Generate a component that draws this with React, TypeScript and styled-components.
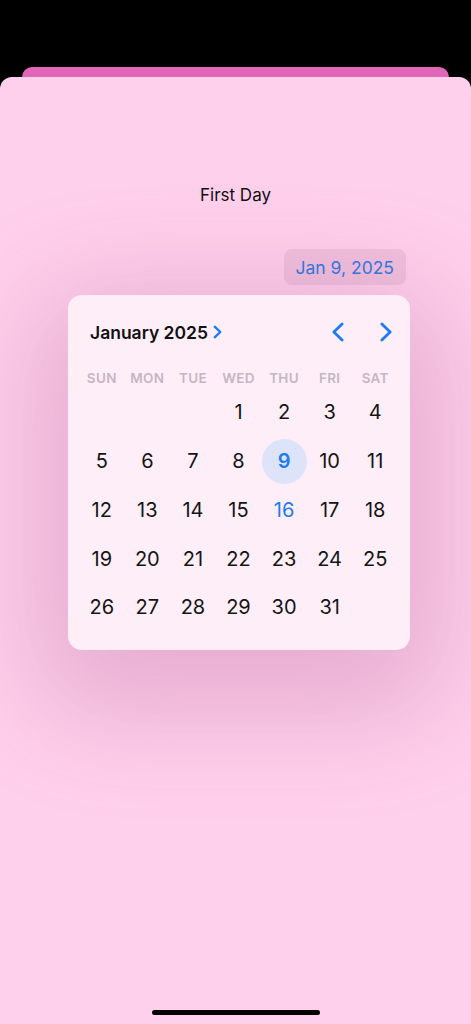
import React from "react";
import styled, { createGlobalStyle } from "styled-components";

const Global = createGlobalStyle`
  html, body { margin: 0; padding: 0; background: #000; }
  body { font-family: Inter, "Noto Sans", "Liberation Sans", sans-serif; -webkit-font-smoothing: antialiased; }
  * { box-sizing: border-box; }
`;

const Screen = styled.div`
  width: 471px;
  height: 1024px;
  background: #000;
  display: flex;
  flex-direction: column;
  padding-top: 67px;
  overflow: hidden;
`;

const BackCard = styled.div`
  height: 10px;
  margin: 0 22px;
  background: #e166b8;
  border-radius: 10px 10px 0 0;
  flex-shrink: 0;
`;

const Sheet = styled.div`
  flex: 1;
  background: #ffd0ec;
  border-radius: 12px 12px 0 0;
  display: flex;
  flex-direction: column;
  align-items: center;
  padding-top: 107px;
`;

const Title = styled.div`
  font-size: 17px;
  line-height: 22px;
  color: #111;
  letter-spacing: 0;
`;

const Content = styled.div`
  align-self: stretch;
  display: flex;
  flex-direction: column;
  align-items: flex-end;
  padding-right: 61px;
  margin-top: 43px;
`;

const DateButton = styled.div`
  height: 36px;
  padding: 0 12px;
  margin-right: 4px;
  border-radius: 8px;
  background: rgba(150, 90, 130, 0.13);
  color: #2a7ce6;
  font-size: 17.5px;
  display: flex;
  align-items: center;
  letter-spacing: 0;
`;

const Calendar = styled.div`
  margin-top: 10px;
  width: 342px;
  height: 355px;
  background: #feeef8;
  border-radius: 14px;
  box-shadow: 0 30px 110px 30px rgba(150, 60, 115, 0.24);
  padding: 15px 12px 0 11px;
  display: flex;
  flex-direction: column;
`;

const Header = styled.div`
  height: 44px;
  display: flex;
  align-items: center;
  padding-left: 11px;
  padding-right: 6px;
`;

const MonthLabel = styled.div`
  font-size: 17.5px;
  font-weight: 600;
  color: #111;
  letter-spacing: 0;
  display: flex;
  align-items: center;
  gap: 5px;
`;

const Nav = styled.div`
  margin-left: auto;
  display: flex;
  align-items: center;
  gap: 36px;
`;

const Grid = styled.div`
  display: grid;
  grid-template-columns: repeat(7, 1fr);
`;

const WeekHead = styled(Grid)`
  margin-top: 14px;
  height: 20px;
  align-items: center;
`;

const WeekDay = styled.div`
  text-align: center;
  font-size: 13.5px;
  font-weight: 600;
  color: #c6b6c3;
  letter-spacing: 0.3px;
`;

const DayCell = styled.div`
  height: 48.75px;
  display: flex;
  align-items: center;
  justify-content: center;
`;

const DayNum = styled.div<{ $selected?: boolean; $today?: boolean }>`
  width: 45px;
  height: 45px;
  border-radius: 50%;
  display: flex;
  align-items: center;
  justify-content: center;
  font-size: 20px;
  font-weight: ${(p) => (p.$selected ? 600 : 400)};
  color: ${(p) => (p.$selected || p.$today ? "#1b7cf2" : "#141414")};
  background: ${(p) => (p.$selected ? "#dde3f8" : "transparent")};
  letter-spacing: 0;
`;

const HomeBar = styled.div`
  margin-top: auto;
  margin-bottom: 9px;
  width: 168px;
  height: 5px;
  border-radius: 3px;
  background: #000;
`;

const Chevron = ({ dir, w, h, sw }: { dir: "left" | "right"; w: number; h: number; sw: number }) => (
  <svg width={w} height={h} viewBox={`0 0 ${w} ${h}`} fill="none">
    <polyline
      points={
        dir === "right"
          ? `${sw / 2 + 0.5},${sw / 2 + 0.5} ${w - sw / 2 - 0.5},${h / 2} ${sw / 2 + 0.5},${h - sw / 2 - 0.5}`
          : `${w - sw / 2 - 0.5},${sw / 2 + 0.5} ${sw / 2 + 0.5},${h / 2} ${w - sw / 2 - 0.5},${h - sw / 2 - 0.5}`
      }
      stroke="#1b7cf2"
      strokeWidth={sw}
      strokeLinecap="round"
      strokeLinejoin="round"
    />
  </svg>
);

const weekdays = ["SUN", "MON", "TUE", "WED", "THU", "FRI", "SAT"];

export default function App() {
  const cells: (number | null)[] = [null, null, null];
  for (let d = 1; d <= 31; d++) cells.push(d);
  while (cells.length < 35) cells.push(null);

  return (
    <>
      <Global />
      <Screen>
        <BackCard />
        <Sheet>
          <Title>First Day</Title>
          <Content>
            <DateButton>Jan 9, 2025</DateButton>
            <Calendar>
              <Header>
                <MonthLabel>
                  January 2025
                  <Chevron dir="right" w={9} h={14} sw={2.4} />
                </MonthLabel>
                <Nav>
                  <Chevron dir="left" w={12} h={20} sw={2.8} />
                  <Chevron dir="right" w={12} h={20} sw={2.8} />
                </Nav>
              </Header>
              <WeekHead>
                {weekdays.map((w) => (
                  <WeekDay key={w}>{w}</WeekDay>
                ))}
              </WeekHead>
              <Grid>
                {cells.map((d, i) => (
                  <DayCell key={i}>
                    {d !== null && (
                      <DayNum $selected={d === 9} $today={d === 16}>
                        {d}
                      </DayNum>
                    )}
                  </DayCell>
                ))}
              </Grid>
            </Calendar>
          </Content>
          <HomeBar />
        </Sheet>
      </Screen>
    </>
  );
}
